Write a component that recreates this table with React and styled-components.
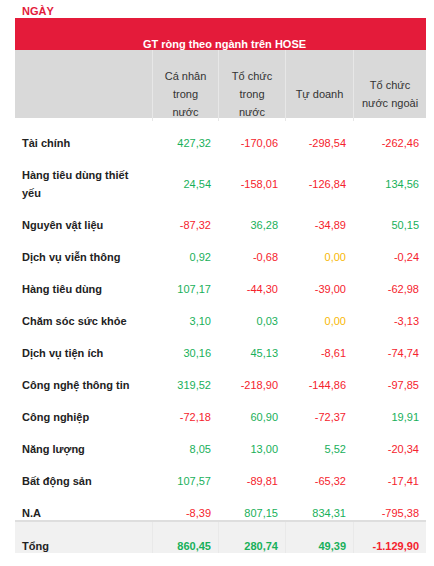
import React from 'react';
import styled, { createGlobalStyle } from 'styled-components';

const GlobalStyle = createGlobalStyle`
  body {
    margin: 0;
    background: #fff;
    font-family: "Liberation Sans", Arial, sans-serif;
    font-size: 11px;
  }
`;

const COLS = '137px 66px 67px 68px 73px';

const ROWS = [
  ['Tài chính', '427,32', '-170,06', '-298,54', '-262,46'],
  ['Hàng tiêu dùng thiết yếu', '24,54', '-158,01', '-126,84', '134,56'],
  ['Nguyên vật liệu', '-87,32', '36,28', '-34,89', '50,15'],
  ['Dịch vụ viễn thông', '0,92', '-0,68', '0,00', '-0,24'],
  ['Hàng tiêu dùng', '107,17', '-44,30', '-39,00', '-62,98'],
  ['Chăm sóc sức khỏe', '3,10', '0,03', '0,00', '-3,13'],
  ['Dịch vụ tiện ích', '30,16', '45,13', '-8,61', '-74,74'],
  ['Công nghệ thông tin', '319,52', '-218,90', '-144,86', '-97,85'],
  ['Công nghiệp', '-72,18', '60,90', '-72,37', '19,91'],
  ['Năng lượng', '8,05', '13,00', '5,52', '-20,34'],
  ['Bất động sản', '107,57', '-89,81', '-65,32', '-17,41'],
  ['N.A', '-8,39', '807,15', '834,31', '-795,38'],
];

const TOTAL = ['Tổng', '860,45', '280,74', '49,39', '-1.129,90'];

const HEADERS = ['Cá nhân trong nước', 'Tổ chức trong nước', 'Tự doanh', 'Tổ chức nước ngoài'];

const tone = (v) => {
  if (v.startsWith('-')) return 'down';
  if (v === '0,00') return 'flat';
  return 'up';
};

const Page = styled.div`
  padding: 0 8px 0 15px;
  width: 411px;
`;

const Tab = styled.div`
  padding: 5px 7px 1px;
  line-height: 12px;
  font-weight: bold;
  color: #e31b3b;
`;

const Title = styled.div`
  height: 32px;
  background: #e41b3a;
  color: #fff;
  font-weight: bold;
  line-height: 12px;
  display: flex;
  align-items: flex-end;
  justify-content: center;
  padding-left: 8px;
  box-sizing: border-box;
`;

const HeadRow = styled.div`
  display: grid;
  grid-template-columns: ${COLS};
  background: #d9d9d9;
  height: 68px;
  border-bottom: 2px solid #fff;
`;

const HeadCell = styled.div`
  display: flex;
  align-items: center;
  justify-content: center;
  text-align: center;
  padding: 17px 7px 0;
  line-height: 18px;
  color: #333;
  border-left: ${(p) => (p.$first ? 'none' : '1px solid #e7e7e7')};
`;

const Row = styled.div`
  display: grid;
  grid-template-columns: ${COLS};
  background: ${(p) => (p.$total ? '#f1f1f1' : '#fff')};
  border-top: ${(p) => (p.$total ? '2px solid #dedede' : 'none')};
  margin-top: ${(p) => (p.$total ? '-2px' : '0')};
`;

const Cell = styled.div`
  padding: ${(p) => (p.$total ? '17px 7px 0' : '14px 7px 0')};
  line-height: ${(p) => (p.$total ? '14px' : '18px')};
  display: flex;
  align-items: center;
  justify-content: flex-end;
  text-align: right;
  font-weight: ${(p) => (p.$total ? 'bold' : 'normal')};
  color: ${(p) =>
    p.$tone === 'down' ? '#f5232d' : p.$tone === 'flat' ? '#f8b808' : '#18b05a'};
  border-left: ${(p) => (p.$total ? '1px solid #e9e9e9' : 'none')};
`;

const Label = styled.div`
  padding: ${(p) => (p.$total ? '17px 7px 0' : '14px 7px 0')};
  line-height: ${(p) => (p.$total ? '14px' : '18px')};
  font-weight: bold;
  color: #222;
`;

const DataRow = ({ cells, total }) => {
  const [label, ...values] = cells;
  return (
    <Row $total={total}>
      <Label $total={total}>{label}</Label>
      {values.map((v, i) => (
        <Cell key={i} $tone={tone(v)} $total={total}>
          {v}
        </Cell>
      ))}
    </Row>
  );
};

export default function App() {
  return (
    <Page>
      <GlobalStyle />
      <Tab>NGÀY</Tab>
      <Title>GT ròng theo ngành trên HOSE</Title>
      <HeadRow>
        <HeadCell $first />
        {HEADERS.map((h) => (
          <HeadCell key={h}>{h}</HeadCell>
        ))}
      </HeadRow>
      {ROWS.map((r) => (
        <DataRow key={r[0]} cells={r} />
      ))}
      <DataRow cells={TOTAL} total />
    </Page>
  );
}
